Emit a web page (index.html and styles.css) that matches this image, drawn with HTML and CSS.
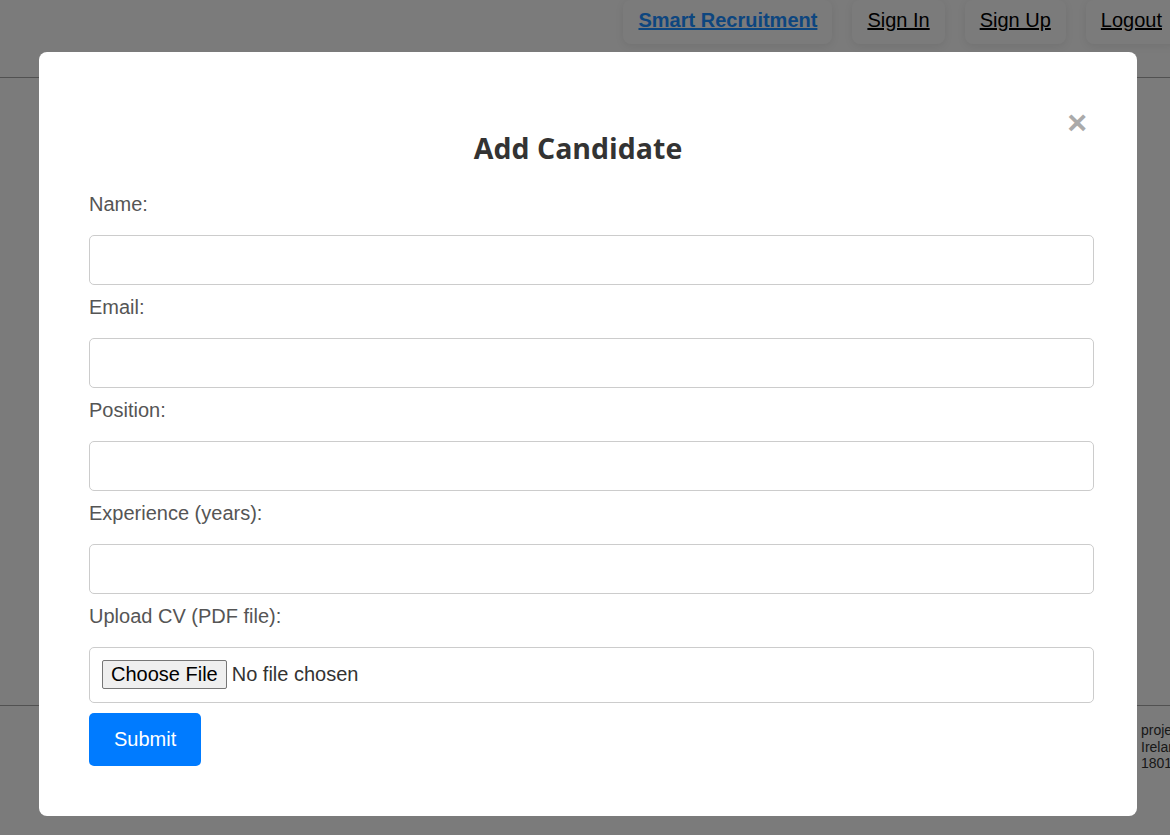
FILE: index.html
```html
<!DOCTYPE html>
<html lang="en">
<head>
<meta charset="utf-8">
<title>Smart Recruitment - Add Candidate</title>
<link rel="stylesheet" href="styles.css">
</head>
<body>
<header class="site-header">
  <nav class="nav">
    <a class="nav-link brand" href="#">Smart Recruitment</a>
    <a class="nav-link" href="#">Sign In</a>
    <a class="nav-link" href="#">Sign Up</a>
    <a class="nav-link" href="#">Logout</a>
  </nav>
</header>
<main class="main"></main>
<footer class="site-footer">
  <div class="footer-info">
    <p class="footer-line">project by Student</p>
    <p class="footer-line">Ireland</p>
    <p class="footer-line">18012345</p>
  </div>
</footer>

<div class="overlay">
  <div class="modal">
    <span class="close">&times;</span>
    <h2 class="modal-title">Add Candidate</h2>
    <form class="form">
      <label class="form-label" for="name">Name:</label>
      <input class="form-input" type="text" id="name">
      <label class="form-label" for="email">Email:</label>
      <input class="form-input" type="email" id="email">
      <label class="form-label" for="position">Position:</label>
      <input class="form-input" type="text" id="position">
      <label class="form-label" for="experience">Experience (years):</label>
      <input class="form-input" type="number" id="experience">
      <label class="form-label" for="cv">Upload CV (PDF file):</label>
      <input class="form-file" type="file" id="cv">
      <button class="submit-btn" type="button">Submit</button>
    </form>
  </div>
</div>
</body>
</html>
```
FILE: styles.css
```css
html, body {
  margin: 0;
  padding: 0;
}
body {
  background: #f6f6f6;
  font-family: "Liberation Sans", Arial, sans-serif;
  overflow: hidden;
  height: 835px;
}
.site-header {
  height: 77px;
  border-bottom: 1px solid #a2a2a2;
  display: flex;
  justify-content: flex-end;
  align-items: flex-start;
}
.nav {
  display: flex;
  gap: 20px;
  margin-right: -7px;
}
.nav-link {
  display: block;
  font-size: 20px;
  line-height: 23px;
  padding: 9px 15px 12px;
  color: #000;
  text-decoration: underline;
  border-radius: 8px;
  box-shadow: 0 2px 8px rgba(0, 0, 0, 0.08);
}
.brand {
  color: #1a8cff;
  font-weight: bold;
}
.main {
  height: 627px;
}
.site-footer {
  border-top: 1px solid #a2a2a2;
  padding: 16px 0 0 1141px;
  white-space: nowrap;
}
.footer-line {
  margin: 0;
  font-size: 14px;
  line-height: 16.5px;
  color: #333;
}
.overlay {
  position: fixed;
  inset: 0;
  background: rgba(0, 0, 0, 0.5);
  display: flex;
  align-items: flex-start;
}
.modal {
  margin: 52px 0 0 39px;
  width: 1098px;
  box-sizing: border-box;
  padding: 50px;
  background: #fff;
  border-radius: 8px;
}
.close {
  float: right;
  color: #aaa;
  font-size: 34px;
  font-weight: bold;
  line-height: 32px;
  margin-top: 4px;
}
.modal-title {
  margin: 27px 0 26px;
  font-family: "Open Sans", sans-serif;
  font-weight: 700;
  font-size: 28.5px;
  line-height: 38px;
  color: #333;
  text-align: center;
}
.form {
  display: block;
}
.form-label {
  display: block;
  font-size: 20px;
  line-height: 22px;
  color: #555;
  margin-bottom: 20px;
}
.form-input {
  display: block;
  box-sizing: border-box;
  width: calc(100% + 7px);
  height: 50px;
  margin: 0 0 11px;
  padding: 12px;
  border: 1px solid #ccc;
  border-radius: 5px;
  font-size: 20px;
  font-family: "Liberation Sans", Arial, sans-serif;
}
.form-file {
  display: block;
  box-sizing: border-box;
  width: calc(100% + 7px);
  height: 56px;
  margin: 0;
  padding: 12px;
  border: 1px solid #ccc;
  border-radius: 5px;
  font-size: 20px;
  font-family: "Liberation Sans", Arial, sans-serif;
  color: #333;
}
.form-file::file-selector-button {
  font-size: 20px;
  font-family: "Liberation Sans", Arial, sans-serif;
  color: #000;
  background: #efefef;
  border: 1px solid #767676;
  border-radius: 2px;
  padding: 2px 8px;
  margin-right: 5px;
}
.submit-btn {
  display: block;
  margin-top: 10px;
  padding: 15px 25px;
  background: #007bff;
  color: #fff;
  border: none;
  border-radius: 5px;
  font-size: 20px;
  line-height: 23px;
  font-family: "Liberation Sans", Arial, sans-serif;
}
```
